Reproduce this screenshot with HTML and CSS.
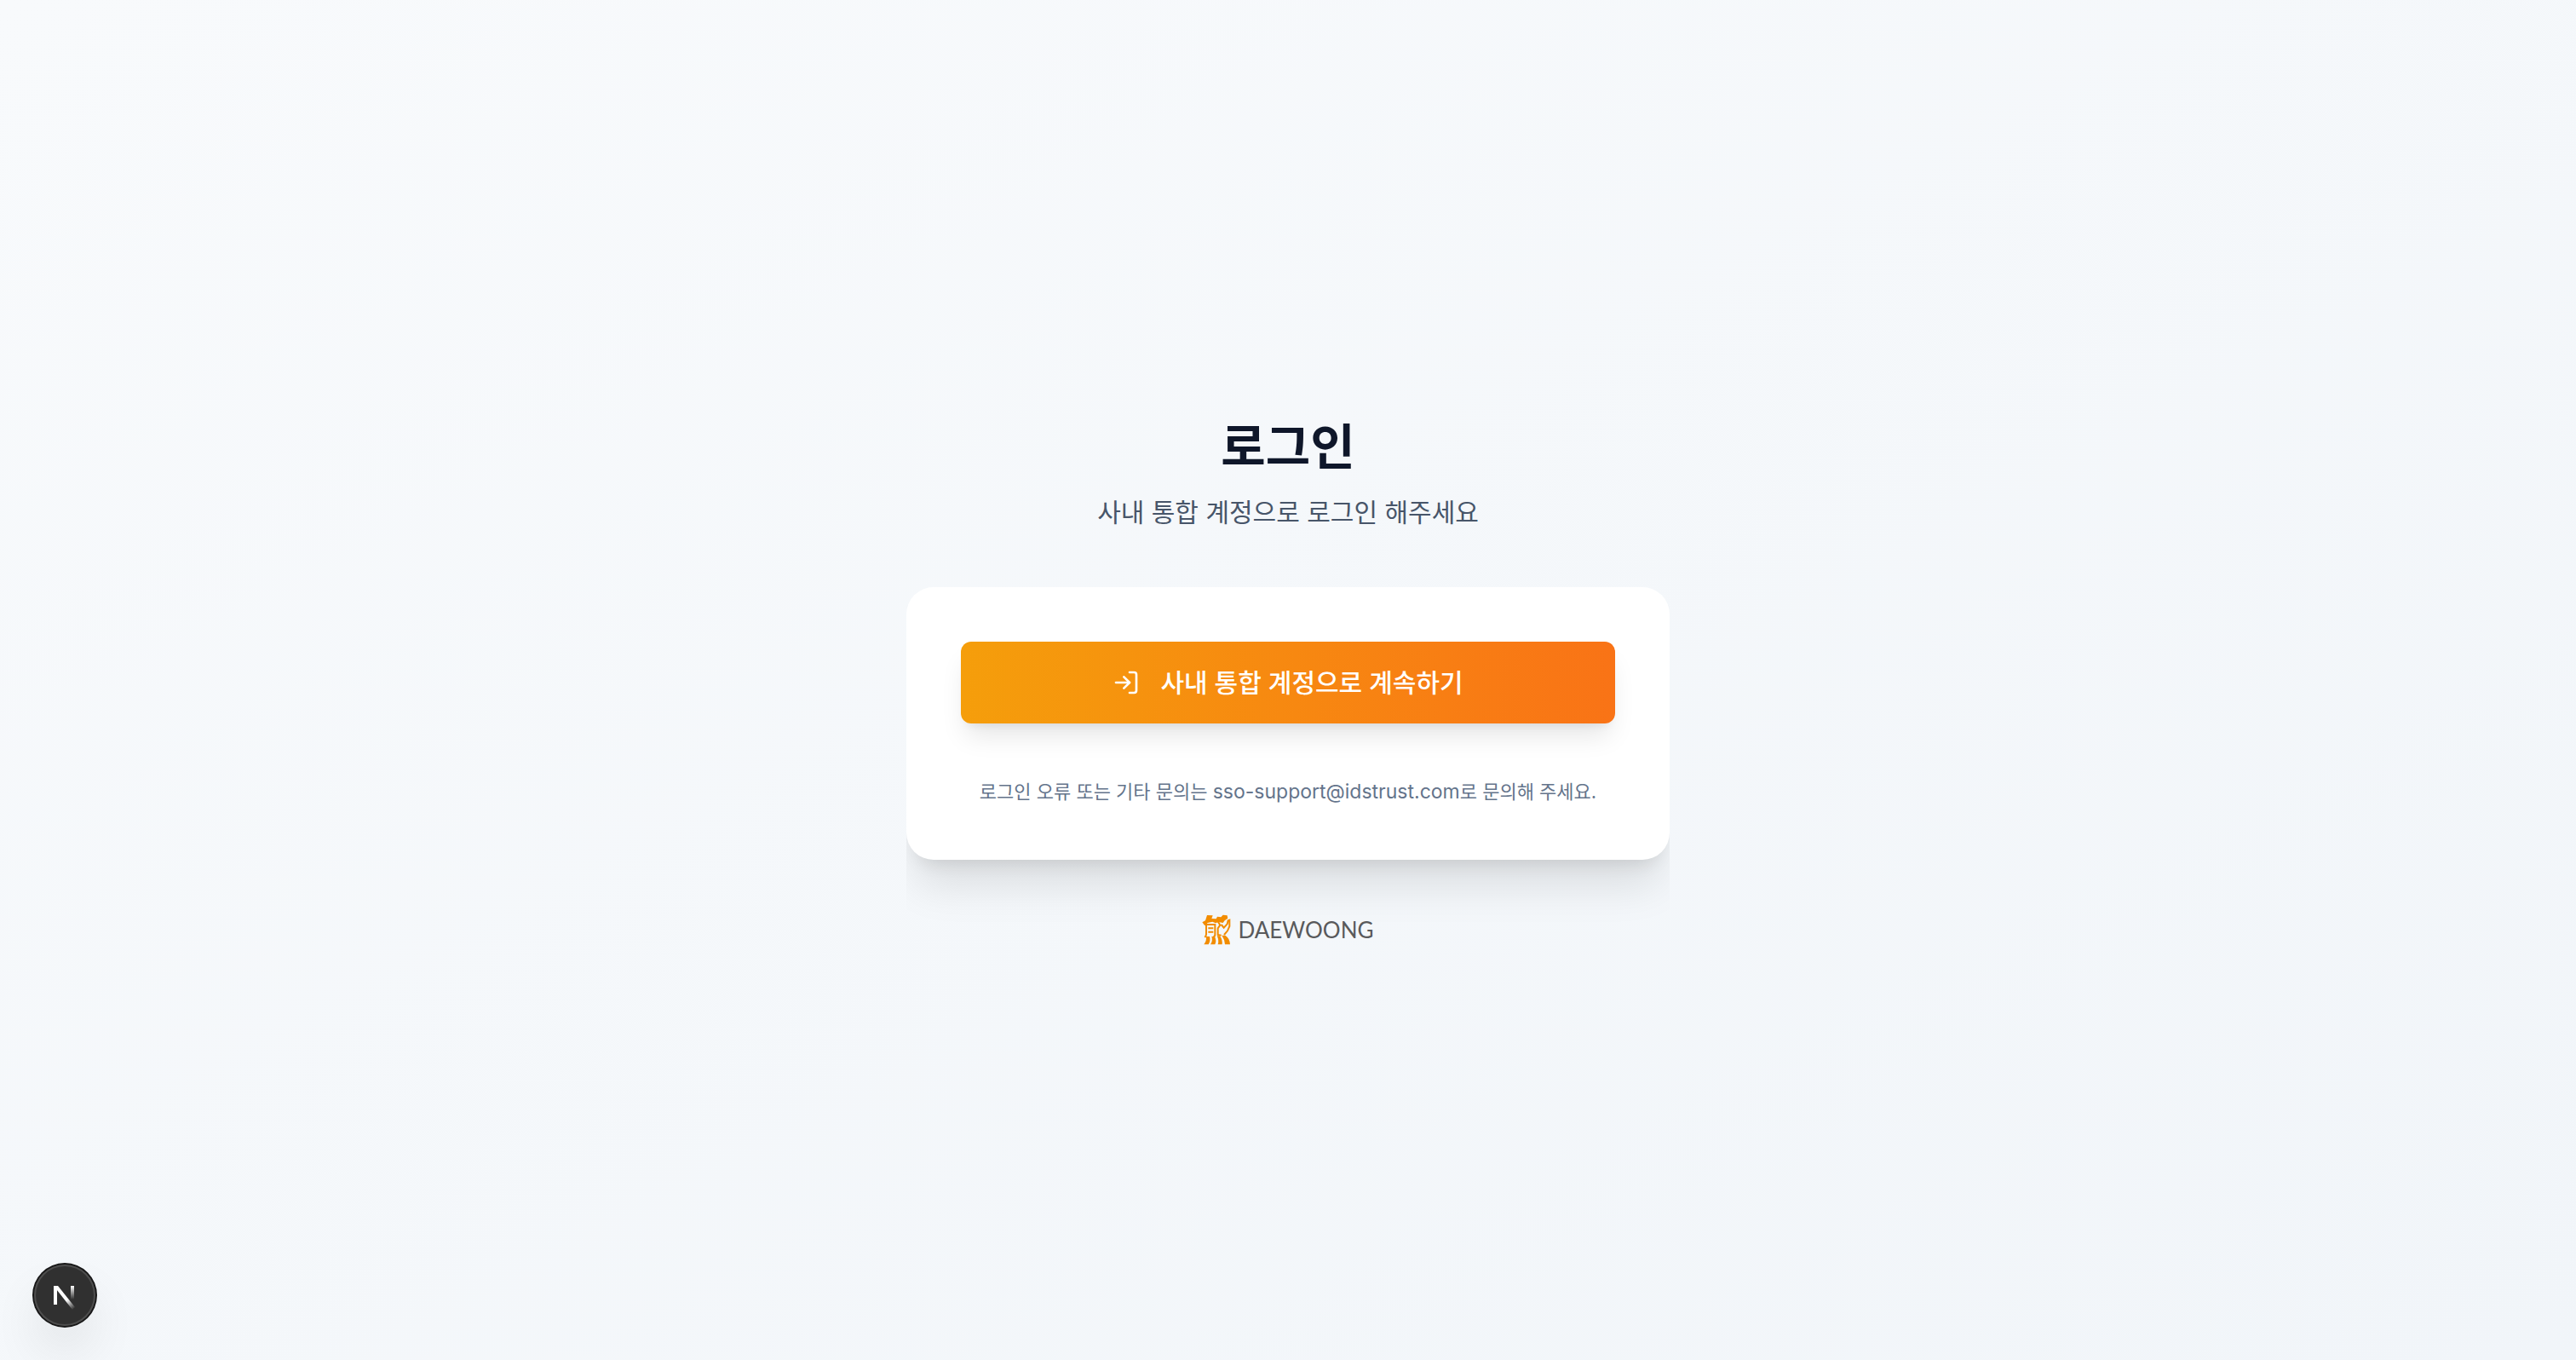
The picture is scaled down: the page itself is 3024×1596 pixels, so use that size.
FILE: index.html
```html
<!DOCTYPE html>
<html lang="ko">
<head>
  <meta charset="utf-8">
  <meta name="viewport" content="width=device-width, initial-scale=1">
  <title>로그인</title>
  <link rel="stylesheet" href="styles.css">
</head>
<body>
  <main class="page">
    <section class="login">
      <header class="intro">
        <h1 class="title">로그인</h1>
        <p class="subtitle">사내 통합 계정으로 로그인 해주세요</p>
      </header>
      <div class="card-area">
        <div class="card">
          <button class="sso-button" type="button">
            <svg class="sso-icon" viewBox="0 0 24 24" aria-hidden="true">
              <path d="M15 3h4a2 2 0 0 1 2 2v14a2 2 0 0 1-2 2h-4"/>
              <path d="M10 17l5-5-5-5"/>
              <path d="M15 12H3"/>
            </svg>
            <span>사내 통합 계정으로 계속하기</span>
          </button>
          <p class="help">로그인 오류 또는 기타 문의는 <span class="email">sso-support@idstrust.com</span>로 문의해 주세요.</p>
        </div>
        <footer class="brand">
          <svg class="brand-mark" viewBox="36 20 102 108" aria-hidden="true">
            <path class="fill" d="M37 48L48 42L54 23L74 24L70 35L86 36L90 28L103 30L110 22L125 24L127 34L116 42L110 50L94 47L84 51L73 46L56 50L46 60Z"/>
            <path class="line" d="M51 52V90Q51 96 46 101M51 56H82V92Q82 98 76 98M58 69H76M58 82H76"/>
            <path class="line" d="M92 45L100 58L92 69V92L104 94M104 56L113 67L125 54L128 42L133 40V62L126 78L114 92"/>
            <path class="fill" d="M51 98H63Q67 112 59 126H43Q53 112 51 98ZM70 98H81Q88 112 82 126H66Q75 112 70 98ZM89 96H99Q109 110 107 126H92Q97 112 89 96ZM106 94H118Q134 104 135 126H117Q116 108 106 94Z"/>
          </svg>
          <span class="brand-name">DAEWOONG</span>
        </footer>
      </div>
    </section>
  </main>
  <button class="dev-badge" type="button" aria-label="Next.js">
    <svg class="dev-icon" viewBox="0 0 40 40" aria-hidden="true">
      <defs>
        <linearGradient id="fade-diagonal" gradientUnits="userSpaceOnUse" x1="23" y1="25" x2="31" y2="36">
          <stop offset="0" stop-color="#fff"/>
          <stop offset="1" stop-color="#fff" stop-opacity="0"/>
        </linearGradient>
        <linearGradient id="fade-stem" gradientUnits="userSpaceOnUse" x1="0" y1="9" x2="0" y2="25">
          <stop offset="0" stop-color="#fff"/>
          <stop offset="1" stop-color="#fff" stop-opacity="0"/>
        </linearGradient>
      </defs>
      <path fill="#fff" d="M7 9H11V31H7Z"/>
      <path fill="url(#fade-diagonal)" d="M7 9H12L32 34L29 37Z"/>
      <path fill="url(#fade-stem)" d="M27 9H31V25H27Z"/>
    </svg>
  </button>
</body>
</html>
```
FILE: styles.css
```css
* {
  box-sizing: border-box;
}

body {
  margin: 0;
  font-family: Inter, "Noto Sans CJK KR", sans-serif;
  color: #0f172a;
}

h1,
p {
  margin: 0;
}

button {
  border: 0;
  padding: 0;
  font: inherit;
  cursor: pointer;
}

.page {
  min-height: 100vh;
  display: flex;
  align-items: center;
  justify-content: center;
  background: linear-gradient(to bottom right, #f8fafc, #f1f5f9);
}

.login {
  width: 100%;
  max-width: 896px;
}

.intro {
  display: flex;
  flex-direction: column;
  gap: 14px;
  padding-bottom: 64px;
  text-align: center;
}

.title {
  font-size: 57px;
  line-height: 76px;
  font-weight: 700;
}

.subtitle {
  font-size: 30px;
  line-height: 48px;
  color: #475569;
}

.card-area {
  overflow: hidden;
}

.card {
  display: flex;
  flex-direction: column;
  gap: 64px;
  padding: 64px;
  border-radius: 32px;
  background: #fff;
  box-shadow: 0 40px 50px -10px rgb(0 0 0 / 10%), 0 16px 20px -12px rgb(0 0 0 / 10%);
}

.sso-button {
  display: flex;
  align-items: center;
  justify-content: center;
  gap: 24px;
  height: 96px;
  border-radius: 12px;
  background: linear-gradient(to right, #f59e0b, #f97316);
  box-shadow: 0 20px 30px -6px rgb(0 0 0 / 10%), 0 8px 12px -8px rgb(0 0 0 / 10%);
  color: #fff;
  font-size: 30px;
  line-height: 48px;
  font-weight: 500;
}

.sso-icon {
  width: 32px;
  height: 32px;
  fill: none;
  stroke: currentColor;
  stroke-width: 2;
  stroke-linecap: round;
  stroke-linejoin: round;
}

.help {
  font-size: 22px;
  line-height: 32px;
  text-align: center;
  color: #64748b;
}

.email {
  font-size: 23px;
}

.brand {
  display: flex;
  align-items: center;
  justify-content: center;
  gap: 8px;
  padding-top: 64px;
}

.brand-mark {
  width: 34px;
  height: 36px;
}

.brand-mark .fill {
  fill: #f28c00;
}

.brand-mark .line {
  fill: none;
  stroke: #f28c00;
  stroke-width: 6;
}

.brand-name {
  font-family: Lato, sans-serif;
  font-size: 26px;
  line-height: 36px;
  color: #595a5c;
}

.dev-badge {
  position: fixed;
  left: 40px;
  bottom: 40px;
  width: 72px;
  height: 72px;
  display: grid;
  place-items: center;
  border-radius: 50%;
  background: #303030;
  box-shadow: inset 0 0 0 2px #4d4d4d, 0 0 0 2px #171717, 0 32px 64px -16px rgb(0 0 0 / 24%);
}

.dev-icon {
  width: 40px;
  height: 40px;
}
```
